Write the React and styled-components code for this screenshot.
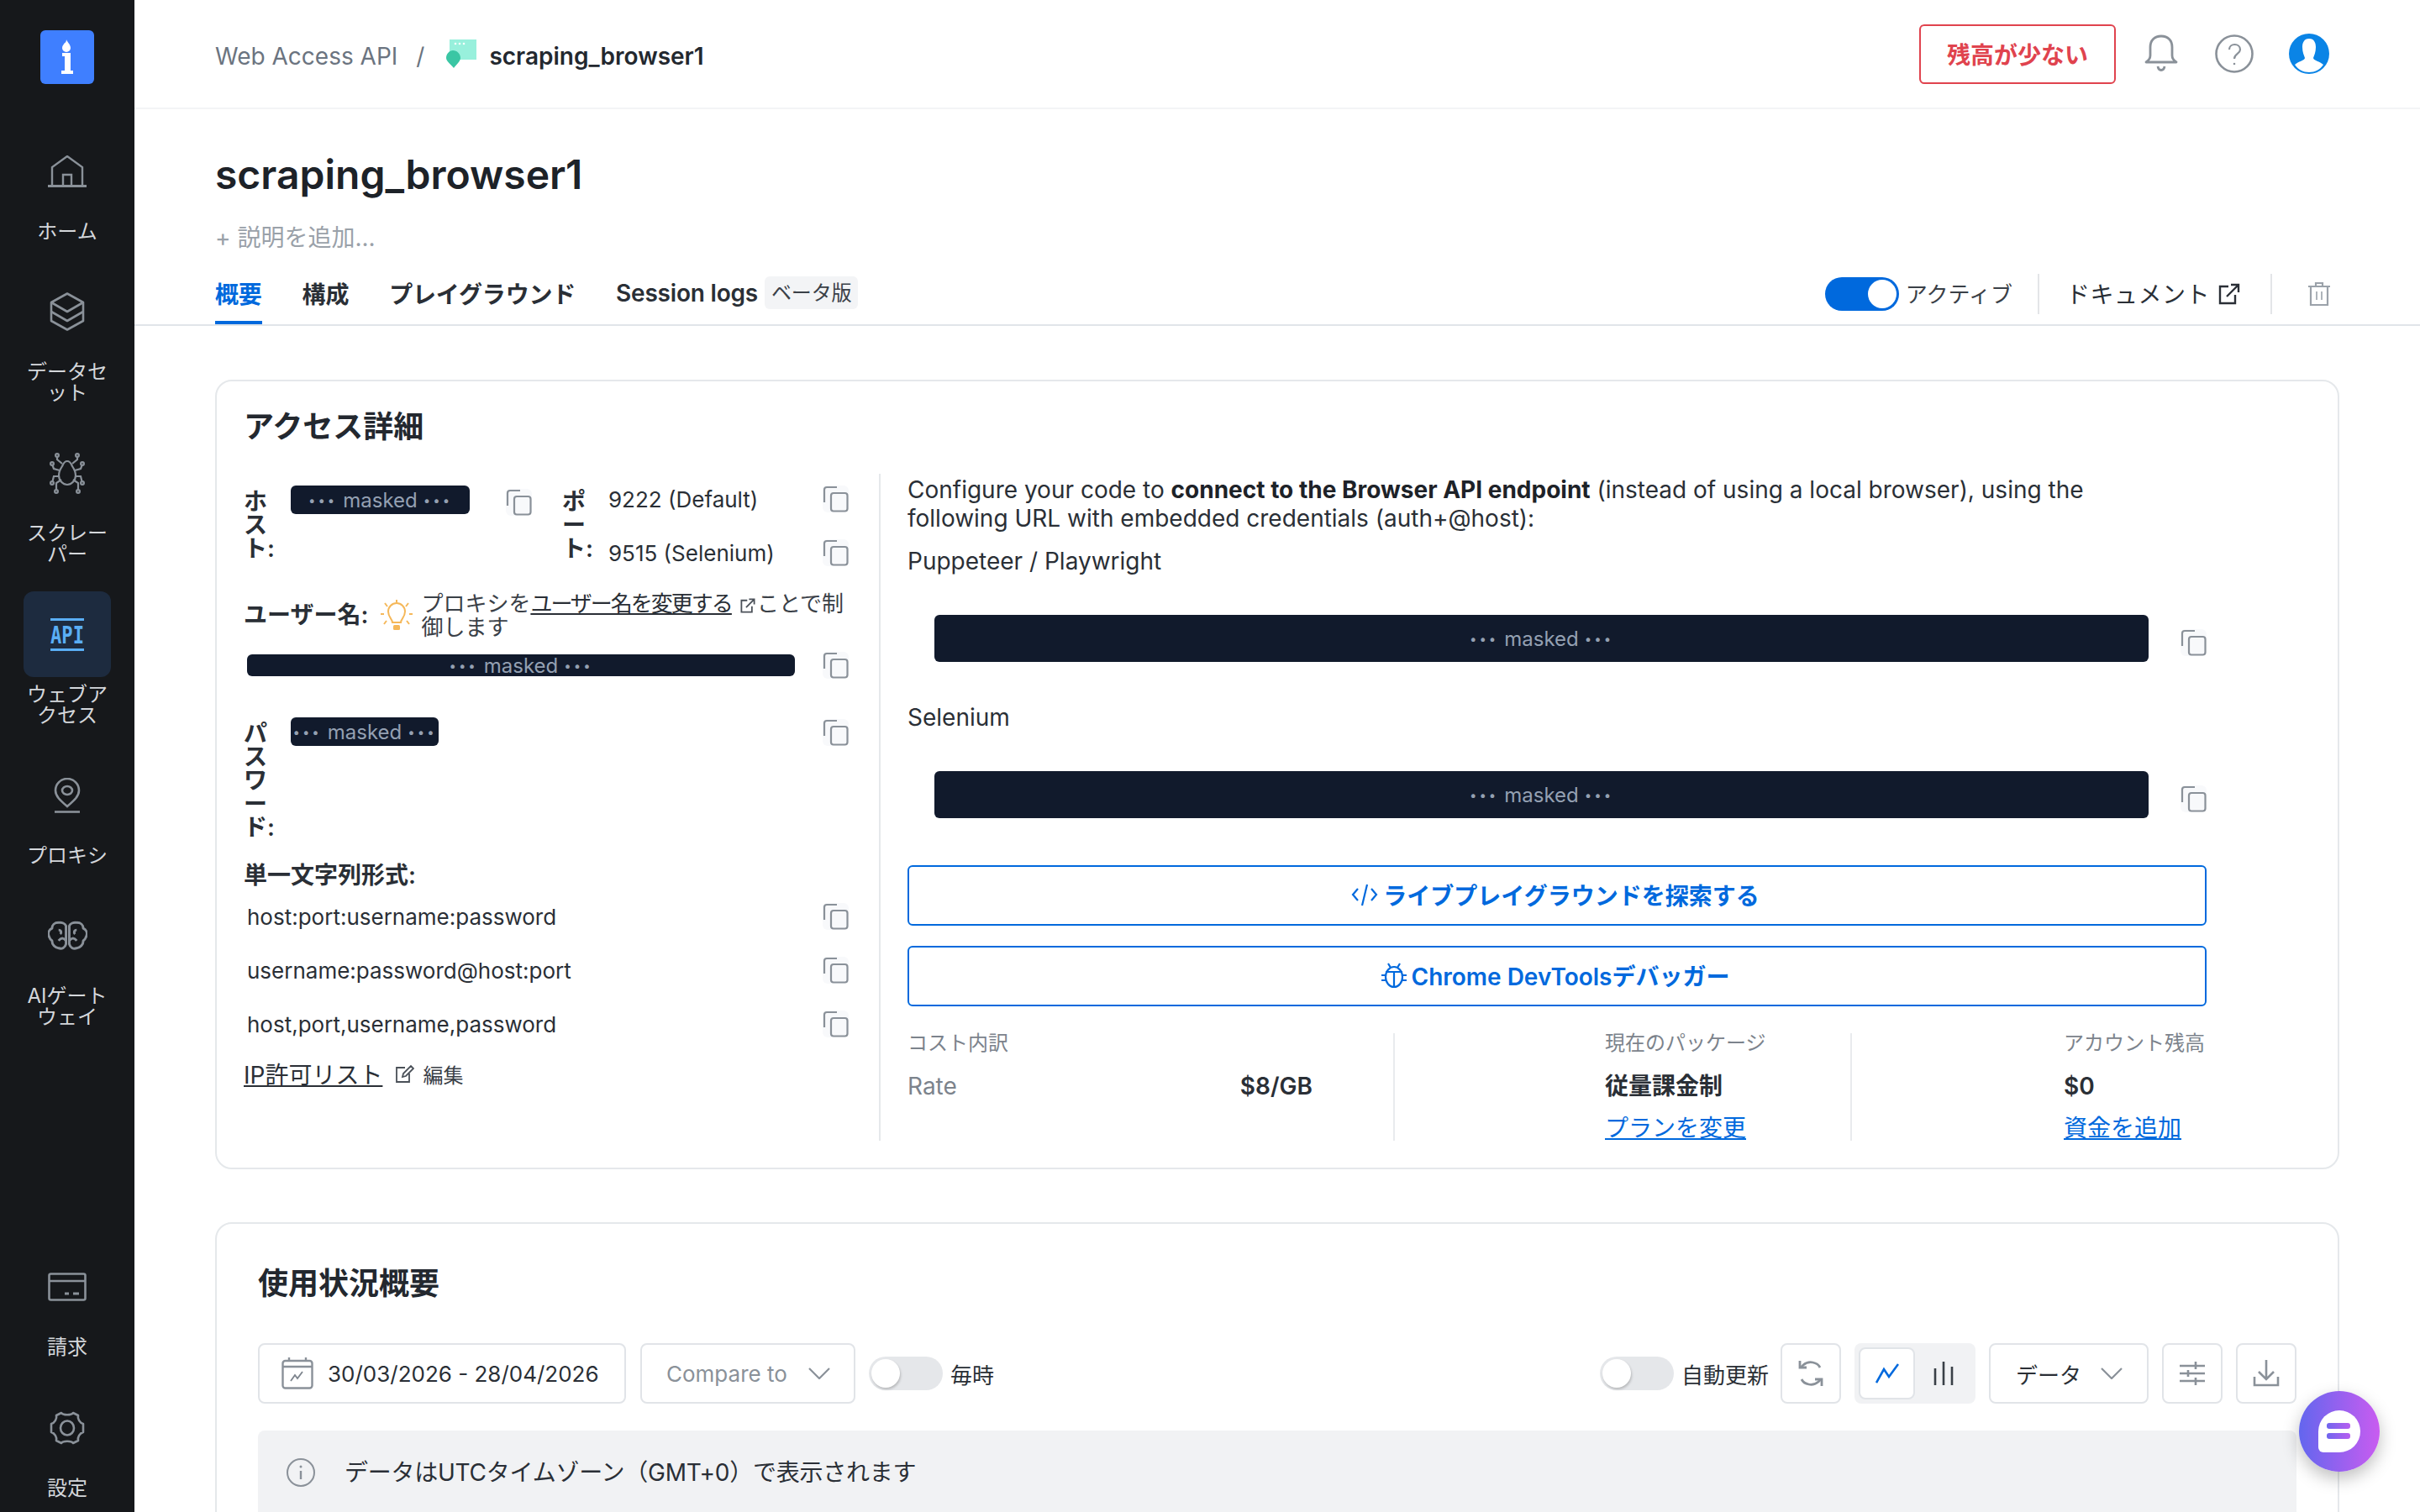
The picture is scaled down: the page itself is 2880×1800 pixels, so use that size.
import React from 'react'
import styled, { createGlobalStyle } from 'styled-components'

const GlobalStyle = createGlobalStyle`
  * { box-sizing: border-box; }
  html, body { margin: 0; padding: 0; height: 100%; overflow: hidden; background: #fff; }
  body { font-family: Inter, "Noto Sans CJK JP", sans-serif; color: #252a31; }
`

const Page = styled.div`
  display: flex;
  width: 2880px;
  height: 1800px;
  overflow: hidden;
`

/* sidebar */
const Sidebar = styled.aside`
  flex: 0 0 160px;
  display: flex;
  flex-direction: column;
  align-items: center;
  background: #16181b;
  padding: 36px 0 16px;
`
const LogoBox = styled.div`
  width: 64px;
  height: 64px;
  margin-bottom: 53px;
`
const NavList = styled.nav`
  display: flex;
  flex-direction: column;
  align-items: center;
  gap: ${(p) => p.$gap}px;
  margin-top: ${(p) => (p.$bottom ? 'auto' : '0')};
`
const NavItem = styled.div`
  width: 104px;
  display: flex;
  flex-direction: column;
  align-items: center;
`
const NavIcon = styled.div`
  width: 104px;
  height: 102px;
  display: flex;
  align-items: center;
  justify-content: center;
  border-radius: 12px;
  background: ${(p) => (p.$active ? '#1d2b3f' : 'transparent')};
`
const NavLabel = styled.div`
  margin-top: 8px;
  width: 104px;
  text-align: center;
  font-size: 24px;
  line-height: 25px;
  color: #d4d7db;
  word-break: break-all;
`

/* main */
const Main = styled.main`
  flex: 1;
  min-width: 0;
  height: 1800px;
  overflow: hidden;
`
const Header = styled.header`
  height: 130px;
  border-bottom: 2px solid #f3f4f6;
  display: flex;
  align-items: center;
  padding: 0 108px 0 96px;
`
const Crumb = styled.span`
  padding-top: 5px;
  font-size: 28px;
  color: #6b7480;
`
const CrumbSep = styled(Crumb)`
  margin: 0 26px 0 22px;
`
const CrumbName = styled.span`
  padding-top: 5px;
  font-size: 28px;
  font-weight: 600;
  color: #23282f;
  margin-left: 15px;
`
const HeaderRight = styled.div`
  margin-left: auto;
  display: flex;
  align-items: center;
`
const WarnButton = styled.div`
  width: 234px;
  height: 71px;
  display: flex;
  align-items: center;
  justify-content: center;
  border: 2px solid #e0434e;
  border-radius: 6px;
  color: #e0434e;
  font-size: 28px;
  font-weight: 600;
  margin-right: 34px;
`
const HeadIcon = styled.div`
  display: flex;
  margin-left: ${(p) => p.$ml || 0}px;
`

const TitleBlock = styled.div`
  padding: 48px 0 0 96px;
`
const PageTitle = styled.h1`
  margin: 0;
  font-size: 48px;
  line-height: 60px;
  font-weight: 600;
  color: #1d2228;
`
const AddDesc = styled.div`
  margin-top: 27px;
  font-size: 28px;
  line-height: 36px;
  color: #9aa1a9;
`
const TabBar = styled.div`
  margin-top: 14px;
  height: 73px;
  display: flex;
  align-items: flex-start;
  justify-content: space-between;
  padding: 0 107px 0 96px;
  border-bottom: 2px solid #e1e5e9;
`
const Tabs = styled.div`
  display: flex;
  gap: 48px;
`
const Tab = styled.div`
  display: flex;
  align-items: center;
  height: 71px;
  font-size: 28px;
  font-weight: 600;
  letter-spacing: -0.2px;
  color: ${(p) => (p.$active ? '#0069dd' : '#2a2f36')};
  border-bottom: 4px solid ${(p) => (p.$active ? '#0069dd' : 'transparent')};
`
const Beta = styled.span`
  margin-left: 8px;
  padding: 0 8px;
  height: 39px;
  line-height: 39px;
  border-radius: 6px;
  background: #f3f4f6;
  font-size: 24px;
  font-weight: 400;
  color: #3a4047;
`
const TabActions = styled.div`
  display: flex;
  align-items: center;
  height: 48px;
  margin-top: 11px;
`
const Switch = styled.div`
  width: 88px;
  height: 40px;
  border-radius: 20px;
  padding: 3px;
  display: flex;
  justify-content: ${(p) => (p.$on ? 'flex-end' : 'flex-start')};
  background: ${(p) => (p.$on ? '#0069dd' : '#e5e7ea')};
  flex: 0 0 auto;
  &::after {
    content: '';
    width: 34px;
    height: 34px;
    border-radius: 50%;
    background: #fff;
    box-shadow: ${(p) => (p.$on ? 'none' : '1px 2px 3px rgba(0,0,0,.2)')};
  }
`
const ActiveLabel = styled.span`
  margin-left: 8px;
  padding-bottom: 3px;
  font-size: 26px;
  color: #3a4047;
`
const VDivider = styled.div`
  width: 2px;
  height: 48px;
  background: #e3e5e8;
  margin: ${(p) => p.$m};
`
const DocLink = styled.span`
  padding-bottom: 3px;
  font-size: 28px;
  letter-spacing: 0.5px;
  color: #2a2f36;
  margin-right: 10px;
`

/* cards */
const Content = styled.div`
  padding: 64px 96px 0;
`
const Card = styled.section`
  border: 2px solid #e5e8eb;
  border-radius: 20px;
  background: #fff;
`
const AccessCard = styled(Card)`
  height: 940px;
  padding: 32px 0 0 32px;
`
const CardTitle = styled.h2`
  margin: 0;
  font-size: 36px;
  line-height: 44px;
  font-weight: 600;
  color: #23282f;
`
const AccessBody = styled.div`
  display: flex;
  margin-top: 34px;
  height: 794px;
`
const LeftCol = styled.div`
  flex: 0 0 758px;
  border-right: 2px solid #e5e8eb;
  padding: 14px 36px 0 0;
  font-size: 28px;
`
const RightCol = styled.div`
  flex: 0 0 1578px;
  padding: 2px 0 0 32px;
`
const Row = styled.div`
  display: flex;
  align-items: ${(p) => p.$align || 'flex-start'};
  margin-top: ${(p) => p.$mt || 0}px;
`
const HostBlock = styled.div`
  flex: 0 0 379px;
  display: flex;
`
const PortBlock = styled.div`
  flex: 0 0 341px;
  display: flex;
`
const NarrowLabel = styled.div`
  flex: 0 0 ${(p) => p.$w || 56}px;
  padding-right: 12px;
  margin-top: 5px;
  font-weight: 600;
  font-size: 28px;
  line-height: 28px;
  color: #2a2f36;
  word-break: break-all;
`
const Chip = styled.div`
  width: ${(p) => p.$w};
  height: ${(p) => p.$h}px;
  margin-left: ${(p) => p.$ml || 0}px;
  flex: 0 0 auto;
  display: flex;
  align-items: center;
  justify-content: center;
  gap: 7px;
  background: #111a2c;
  color: #94a0b2;
  border-radius: 6px;
  font-size: 24px;
  white-space: nowrap;
`
const Dots = styled.span`
  font-size: 15px;
  letter-spacing: 3px;
`
const CopyBox = styled.div`
  flex: 0 0 auto;
  width: 31px;
  height: 32px;
  margin-left: ${(p) => p.$ml || 'auto'};
  margin-top: ${(p) => p.$mt || 0}px;
  background: #f8f9fb;
  border-radius: 6px;
  display: flex;
`
const PortValues = styled.div`
  flex: 1;
  display: flex;
  flex-direction: column;
  gap: 32px;
`
const ValueRow = styled.div`
  display: flex;
  align-items: center;
  height: 32px;
  font-size: 26px;
  color: #2a2f36;
`
const UserLabel = styled.div`
  font-size: 28px;
  font-weight: 600;
  margin: 0 15px 6px 0;
  color: #2a2f36;
  white-space: nowrap;
`
const BulbSlot = styled.div`
  display: flex;
  margin-right: 10px;
`
const Hint = styled.div`
  font-size: 26px;
  line-height: 26px;
  color: #3a4047;
  width: 504px;
  word-break: break-all;
`
const HintLink = styled.a`
  text-decoration: underline;
  letter-spacing: -2px;
  color: #2a2f36;
`
const InlineIcon = styled.span`
  display: inline-block;
  vertical-align: -2px;
  margin: 0 2px 0 10px;
`
const FormatTitle = styled.div`
  margin-top: 29px;
  font-size: 28px;
  line-height: 28px;
  font-weight: 600;
  color: #2a2f36;
`
const FormatList = styled.div`
  margin-top: 19px;
  display: flex;
  flex-direction: column;
  gap: 32px;
  padding-left: 4px;
`
const IpRow = styled.div`
  display: flex;
  align-items: center;
  margin-top: 26px;
  height: 34px;
`
const IpLink = styled.a`
  font-size: 28px;
  text-decoration: underline;
  color: #2a2f36;
  margin-right: 16px;
`
const EditText = styled.span`
  font-size: 24px;
  color: #3a4047;
  margin-left: 10px;
`
const Para = styled.p`
  margin: 0;
  max-width: 1490px;
  font-size: 28px;
  line-height: 34px;
  color: #2a2f36;
  b { font-weight: 700; color: #1d2228; }
`
const PlainLine = styled.div`
  margin-top: ${(p) => p.$mt}px;
  font-size: 28px;
  line-height: 34px;
  color: #2a2f36;
`
const EndpointRow = styled.div`
  display: flex;
  margin-top: 47px;
  padding-left: 32px;
  width: 1546px;
`
const OutlineButton = styled.div`
  width: 1546px;
  height: 72px;
  margin-top: ${(p) => p.$mt}px;
  padding: 0 4px 2px 0;
  display: flex;
  align-items: center;
  justify-content: center;
  gap: 6px;
  border: 2px solid #0069dd;
  border-radius: 6px;
  color: #0069dd;
  font-size: 28px;
  font-weight: 600;
`
const Stats = styled.div`
  display: flex;
  width: 1546px;
  height: 128px;
  margin-top: 32px;
`
const StatCol = styled.div`
  flex: ${(p) => p.$w ? `0 0 ${p.$w}px` : '1'};
  padding-left: ${(p) => p.$pl || 0}px;
  padding-right: ${(p) => p.$pr || 0}px;
  border-right: ${(p) => (p.$line ? '2px solid #e9ebee' : 'none')};
`
const StatLabel = styled.div`
  font-size: 24px;
  line-height: 24px;
  color: #7c838c;
`
const StatValue = styled.div`
  display: flex;
  justify-content: space-between;
  margin-top: 22px;
  font-size: 28px;
  line-height: 34px;
  font-weight: 600;
  color: #2a2f36;
`
const RateName = styled.span`
  font-weight: 400;
  color: #7c838c;
`
const StatLink = styled.a`
  display: block;
  margin-top: 18px;
  font-size: 28px;
  line-height: 30px;
  color: #0069dd;
  text-decoration: underline;
`

/* usage card */
const UsageCard = styled(Card)`
  margin-top: 63px;
  height: 500px;
  padding: 49px 49px 0;
`
const Toolbar = styled.div`
  display: flex;
  align-items: center;
  margin-top: 49px;
  height: 72px;
`
const SelectBox = styled.div`
  width: ${(p) => p.$w}px;
  height: 72px;
  flex: 0 0 auto;
  display: flex;
  align-items: center;
  padding: ${(p) => p.$pad};
  gap: ${(p) => p.$gap || 0}px;
  justify-content: ${(p) => p.$justify || 'flex-start'};
  margin-right: ${(p) => p.$mr || 0}px;
  border: 2px solid #e1e4e8;
  border-radius: 8px;
  font-size: ${(p) => p.$fs || 26}px;
  color: ${(p) => p.$color || '#2a2f36'};
  white-space: nowrap;
`
const SmallLabel = styled.span`
  margin: 0 ${(p) => p.$mr || 0}px 0 9px;
  font-size: 26px;
  color: #2a2f36;
  white-space: nowrap;
`
const Spacer = styled.div`
  flex: 1;
`
const ChartSwitch = styled.div`
  width: 144px;
  height: 72px;
  margin-right: 16px;
  padding: 5px;
  display: flex;
  background: #f1f2f4;
  border-radius: 8px;
`
const ChartOption = styled.div`
  width: 67px;
  height: 62px;
  display: flex;
  align-items: center;
  justify-content: center;
  border-radius: 8px;
  background: ${(p) => (p.$on ? '#fff' : 'transparent')};
  border: 2px solid ${(p) => (p.$on ? '#e1e4e8' : 'transparent')};
`
const IconButton = styled(SelectBox)`
  justify-content: center;
  padding: 0;
`
const Alert = styled.div`
  margin-top: 32px;
  height: 160px;
  padding: 32px 0 0 34px;
  display: flex;
  align-items: flex-start;
  gap: 35px;
  background: #f1f2f4;
  border-radius: 8px;
  font-size: 28px;
  line-height: 36px;
  letter-spacing: -0.25px;
  color: #2a2f36;
`
const ChatBubble = styled.div`
  position: fixed;
  left: 2736px;
  top: 1656px;
  width: 96px;
  height: 96px;
  display: flex;
  align-items: center;
  justify-content: center;
  border-radius: 50%;
  background: linear-gradient(90deg, #6366ee, #c95cf0);
  box-shadow: 0 8px 20px rgba(0, 0, 0, 0.25);
`

/* drawings */
const G = '#8a9199'

const Logo = () => (
  <svg width="64" height="64" viewBox="0 0 64 64">
    <rect width="64" height="64" rx="6" fill="#3f7fff" />
    <path d="M31 11c1 3 5 6 5 10a5 5 0 0 1-10 0c0-3 2-4 3-6 1 0 2-2 2-4z" fill="#fff" />
    <path d="M26 27h10v21h3v4H25v-4h4V31h-3z" fill="#fff" />
  </svg>
)
const HomeIcon = () => (
  <svg width="46" height="38" viewBox="0 0 46 38" fill="none" stroke={G} strokeWidth="2.4">
    <path d="M5 36V14L23 1l18 13v22" />
    <path d="M18 36V23h10v13" />
    <path d="M0 36.5h46" strokeWidth="3" />
  </svg>
)
const StackIcon = () => (
  <svg width="42" height="46" viewBox="0 0 42 46" fill="none" stroke={G} strokeWidth="2.6" strokeLinejoin="round">
    <path d="M21 1.5 40 12v22L21 44.5 2 34V12z" />
    <path d="M2 12l19 11 19-11" />
    <path d="M2 23l19 11 19-11" />
  </svg>
)
const SpiderIcon = () => {
  const legs = (
    <g>
      <circle cx="10" cy="4" r="1.9" />
      <path d="M16 14l-6-5V6" />
      <circle cx="4" cy="14" r="1.9" />
      <path d="M13 22l-7-2-1.5-4" />
      <circle cx="4" cy="37" r="1.9" />
      <path d="M13 29H6l-1.5 6" />
      <circle cx="9" cy="47" r="1.9" />
      <path d="M15 33l-6 4v8" />
    </g>
  )
  return (
    <svg width="44" height="51" viewBox="0 0 44 51" fill="none" stroke={G} strokeWidth="2.2">
      <path d="M22 11c4 0 5 4 6 6 2 3 4 7 4 11 0 6-5 11-10 11s-10-5-10-11c0-4 2-8 4-11 1-2 2-6 6-6z" />
      {legs}
      <g transform="translate(44 0) scale(-1 1)">{legs}</g>
    </svg>
  )
}
const ApiIcon = () => (
  <svg width="40" height="39" viewBox="0 0 40 39" overflow="visible">
    <rect width="40" height="3" fill="#5aaef5" />
    <rect y="36" width="40" height="3" fill="#5aaef5" />
    <text x="20" y="30" textAnchor="middle" fontFamily="'DejaVu Sans Mono', monospace" fontWeight="700" fontSize="29" fill="#5aaef5" textLength="40" lengthAdjust="spacingAndGlyphs">API</text>
  </svg>
)
const PinIcon = () => (
  <svg width="32" height="42" viewBox="0 0 32 42" fill="none" stroke={G} strokeWidth="2.6">
    <path d="M16 34C8 27 2 22 2 15a14 14 0 0 1 28 0c0 7-6 12-14 19z" />
    <ellipse cx="16" cy="15" rx="6" ry="5" />
    <path d="M1 40.5h30" />
  </svg>
)
const BrainIcon = () => {
  const half = (
    <g>
      <path d="M22 6C21 3 17 1.5 13 2 8 2 5 5 5 9c-4 2-5 6-4 9 1 3 2 5 4 6 0 5 4 9 8 9 4 2 8-1 9-5z" />
      <path d="M13 11c3 0 4 3 2 5M22 24c-3-4-6-4-9 0" />
    </g>
  )
  return (
    <svg width="47" height="36" viewBox="0 0 48 36" fill="none" stroke={G} strokeWidth="3" strokeLinejoin="round">
      {half}
      <g transform="translate(48 0) scale(-1 1)">{half}</g>
    </svg>
  )
}
const BillIcon = () => (
  <svg width="46" height="34" viewBox="0 0 46 34" fill="none" stroke={G} strokeWidth="2.6">
    <rect x="1.5" y="1.5" width="43" height="31" rx="2" />
    <path d="M1.5 10h43" />
    <path d="M20 25h5M30 25h7" strokeWidth="3" />
  </svg>
)
const GearIcon = () => (
  <svg width="42" height="42" viewBox="0 0 42 42" fill="none" stroke={G} strokeWidth="2.6">
    <path d="M14 3c2 3 12 3 14 0l6 3c-1 4 2 9 6 10v10c-4 1-7 6-6 10l-6 3c-2-3-12-3-14 0l-6-3c1-4-2-9-6-10V16c4-1 7-6 6-10z" strokeLinejoin="round" />
    <ellipse cx="21" cy="21" rx="8" ry="8.5" />
  </svg>
)
const BranchIcon = () => (
  <svg width="36" height="34" viewBox="0 0 36 34">
    <rect x="4" width="32" height="24" fill="#98f0dc" />
    <circle cx="11" cy="5" r="1.3" fill="#fff" />
    <circle cx="16" cy="5" r="1.3" fill="#fff" />
    <circle cx="21" cy="5" r="1.3" fill="#fff" />
    <path d="M8 13c5 0 9 4 9 9 0 4-5 8-8 12-3-4-9-8-9-12 0-5 4-9 8-9z" fill="#3ac6a4" />
  </svg>
)
const BellIcon = () => (
  <svg width="40" height="46" viewBox="0 0 40 46" fill="none" stroke={G} strokeWidth="2.8">
    <path d="M2 33c3-2 5-4 5-8V15C7 7 12 2 20 2s13 5 13 13v10c0 4 2 6 5 8z" strokeLinejoin="round" />
    <path d="M16 38c1 6 7 6 8 0" />
  </svg>
)
const HelpIcon = () => (
  <svg width="46" height="46" viewBox="0 0 46 46" fill="none" stroke={G} strokeWidth="2.6">
    <circle cx="23" cy="23" r="21.5" />
    <path d="M17 18c0-8 13-8 13 0 0 5-7 5-7 11" strokeWidth="2.2" />
    <circle cx="23" cy="35" r="1.3" fill={G} stroke="none" />
  </svg>
)
const AvatarIcon = () => (
  <svg width="48" height="48" viewBox="0 0 48 48">
    <circle cx="24" cy="24" r="24" fill="#0a84e6" />
    <path d="M24 6c6 0 8 5 8 10 0 6-2 10-3 13 0 3 8 4 12 8-4 6-10 9-17 9s-13-3-17-9c4-4 12-5 12-8-1-3-3-7-3-13 0-5 2-10 8-10z" fill="#fff" />
  </svg>
)
const ExternalIcon = ({ size = 26, color = '#2a2f36', w = 2.4 }) => (
  <svg width={size} height={size} viewBox="0 0 26 26" fill="none" stroke={color} strokeWidth={w}>
    <path d="M12 4H2v20h18V14" />
    <path d="M10 16 24 2M15 2h9v9" />
  </svg>
)
const TrashIcon = () => (
  <svg width="26" height="30" viewBox="0 0 26 30" fill="none" stroke="#9ba2aa" strokeWidth="2.2">
    <path d="M0 6h26M9 6V2h8v4" />
    <path d="M3 6v22h20V6" />
    <path d="M10 12v10M16 12v10" strokeWidth="1.6" />
  </svg>
)
const CopyIcon = () => (
  <svg width="31" height="32" viewBox="0 0 31 32" fill="none" stroke={G} strokeWidth="2.2">
    <path d="M2 20V5a3 3 0 0 1 3-3h12" />
    <rect x="10" y="9" width="19.5" height="21.5" rx="3" />
  </svg>
)
const Copy = ({ ml, mt }) => (
  <CopyBox $ml={ml} $mt={mt}>
    <CopyIcon />
  </CopyBox>
)
const Masked = ({ w, h, ml }) => (
  <Chip $w={w} $h={h} $ml={ml}>
    <Dots>•••</Dots>masked<Dots>•••</Dots>
  </Chip>
)
const BulbIcon = () => (
  <svg width="38" height="38" viewBox="0 0 38 38" fill="none" stroke="#f5b85a" strokeWidth="2">
    <path d="M14 27c0-4-5-6-5-13a10 10 0 0 1 20 0c0 7-5 9-5 13z" />
    <rect x="15" y="30" width="8" height="6" rx="1.5" fill="#f5b85a" stroke="none" />
    <path d="M19 0v3M5 4l3 4M33 4l-3 4M0 17h4M34 17h4M4 29l3-4M34 29l-3-4" />
  </svg>
)
const EditIcon = () => (
  <svg width="22" height="22" viewBox="0 0 22 22" fill="none" stroke="#4a5058" strokeWidth="1.8">
    <path d="M11 4H1v17h15V11" />
    <path d="M8 15l1-4L18 2l3 3-9 9z" />
  </svg>
)
const CodeIcon = () => (
  <svg width="32" height="30" viewBox="0 0 32 30" fill="none" stroke="#0069dd" strokeWidth="2.2">
    <path d="M8 8 2 15l6 7M24 8l6 7-6 7M19 3l-6 25" />
  </svg>
)
const BugIcon = () => (
  <svg width="30" height="32" viewBox="0 0 30 32" fill="none" stroke="#0069dd" strokeWidth="2.2">
    <ellipse cx="15" cy="18" rx="10" ry="12" />
    <path d="M5 12h20M15 12v18M8 2l3 5M22 2l-3 5M0 16h5M0 22h5M25 16h5M25 22h5" />
  </svg>
)
const CalendarIcon = () => (
  <svg width="38" height="38" viewBox="0 0 38 38" fill="none" stroke={G} strokeWidth="2.4">
    <rect x="1.5" y="4" width="35" height="32.5" rx="3" />
    <path d="M1.5 11h35M9 0v4M29 0v4" />
    <path d="M11 28l5-7 3 4 6-8" stroke="#7c838c" strokeWidth="1.8" />
  </svg>
)
const Chevron = () => (
  <svg width="26" height="14" viewBox="0 0 26 14" fill="none" stroke={G} strokeWidth="2.2">
    <path d="M1 1l12 12L25 1" />
  </svg>
)
const RefreshIcon = () => (
  <svg width="32" height="34" viewBox="0 0 32 34" fill="none" stroke={G} strokeWidth="2.8">
    <path d="M27 10C24 4 14 1 7 7l-3 3" />
    <path d="M3 2v8h8" />
    <path d="M5 24c3 6 13 9 20 3l3-3" />
    <path d="M29 32v-8h-8" />
  </svg>
)
const LineIcon = () => (
  <svg width="28" height="26" viewBox="0 0 28 26" fill="none" stroke="#0069dd" strokeWidth="2.6">
    <path d="M1 24 10 8l6 9L27 2" />
  </svg>
)
const BarsIcon = () => (
  <svg width="26" height="28" viewBox="0 0 26 28" fill="none" stroke="#3a4047" strokeWidth="2.6">
    <path d="M3 8v20M13 0v28M23 6v22" />
  </svg>
)
const SlidersIcon = () => (
  <svg width="30" height="30" viewBox="0 0 30 30" fill="none" stroke={G} strokeWidth="2.6">
    <path d="M0 6h30M0 15h30M0 24h30" />
    <path d="M19 1v9M10 11v8M19 20v9" />
  </svg>
)
const DownloadIcon = () => (
  <svg width="32" height="32" viewBox="0 0 32 32" fill="none" stroke={G} strokeWidth="2.6">
    <path d="M16 0v22M7 14l9 9 9-9" />
    <path d="M2 20v10h28V20" />
  </svg>
)
const InfoIcon = () => (
  <svg width="34" height="36" viewBox="0 0 34 36" fill="none" stroke={G} strokeWidth="2">
    <circle cx="17" cy="18" r="16" />
    <path d="M17 16v10" strokeWidth="2.4" />
    <circle cx="17" cy="11" r="1.5" fill={G} stroke="none" />
  </svg>
)
const ChatIcon = () => (
  <svg width="50" height="50" viewBox="0 0 50 50">
    <defs>
      <linearGradient id="chatLines" x1="0" x2="1" y1="0" y2="0">
        <stop offset="0" stopColor="#6f66ee" />
        <stop offset="1" stopColor="#b85ff0" />
      </linearGradient>
    </defs>
    <path d="M25 0a25 25 0 0 1 0 50H6a6 6 0 0 1-6-6V25A25 25 0 0 1 25 0z" fill="#fff" />
    <rect x="10" y="15" width="28" height="7" rx="3" fill="url(#chatLines)" />
    <rect x="10" y="27" width="28" height="7" rx="3" fill="url(#chatLines)" />
  </svg>
)

const topNav = [
  { label: 'ホーム', icon: <HomeIcon /> },
  { label: 'データセット', icon: <StackIcon /> },
  { label: 'スクレーパー', icon: <SpiderIcon /> },
  { label: 'ウェブアクセス', icon: <ApiIcon />, active: true },
  { label: 'プロキシ', icon: <PinIcon /> },
  { label: 'AIゲートウェイ', icon: <BrainIcon /> },
]
const bottomNav = [
  { label: '請求', icon: <BillIcon /> },
  { label: '設定', icon: <GearIcon /> },
]
const formats = [
  'host:port:username:password',
  'username:password@host:port',
  'host,port,username,password',
]

function NavEntry({ item }) {
  return (
    <NavItem>
      <NavIcon $active={item.active}>{item.icon}</NavIcon>
      <NavLabel>{item.label}</NavLabel>
    </NavItem>
  )
}

export default function App() {
  return (
    <Page>
      <GlobalStyle />
      <Sidebar>
        <LogoBox>
          <Logo />
        </LogoBox>
        <NavList $gap={32}>
          {topNav.map((item) => (
            <NavEntry key={item.label} item={item} />
          ))}
        </NavList>
        <NavList $gap={33} $bottom>
          {bottomNav.map((item) => (
            <NavEntry key={item.label} item={item} />
          ))}
        </NavList>
      </Sidebar>

      <Main>
        <Header>
          <Crumb>Web Access API</Crumb>
          <CrumbSep>/</CrumbSep>
          <BranchIcon />
          <CrumbName>scraping_browser1</CrumbName>
          <HeaderRight>
            <WarnButton>残高が少ない</WarnButton>
            <HeadIcon>
              <BellIcon />
            </HeadIcon>
            <HeadIcon $ml={44}>
              <HelpIcon />
            </HeadIcon>
            <HeadIcon $ml={42}>
              <AvatarIcon />
            </HeadIcon>
          </HeaderRight>
        </Header>

        <TitleBlock>
          <PageTitle>scraping_browser1</PageTitle>
          <AddDesc>+ 説明を追加...</AddDesc>
        </TitleBlock>

        <TabBar>
          <Tabs>
            <Tab $active>概要</Tab>
            <Tab>構成</Tab>
            <Tab>プレイグラウンド</Tab>
            <Tab>
              Session logs<Beta>ベータ版</Beta>
            </Tab>
          </Tabs>
          <TabActions>
            <Switch $on />
            <ActiveLabel>アクティブ</ActiveLabel>
            <VDivider $m="0 32px 0 30px" />
            <DocLink>ドキュメント</DocLink>
            <ExternalIcon />
            <VDivider $m="0 43px 0 36px" />
            <TrashIcon />
          </TabActions>
        </TabBar>

        <Content>
          <AccessCard>
            <CardTitle>アクセス詳細</CardTitle>
            <AccessBody>
              <LeftCol>
                <Row>
                  <HostBlock>
                    <NarrowLabel>ホスト:</NarrowLabel>
                    <Masked w="213px" h={34} />
                    <Copy ml="43px" mt={4} />
                  </HostBlock>
                  <PortBlock>
                    <NarrowLabel $w={55}>ポート:</NarrowLabel>
                    <PortValues>
                      <ValueRow>
                        9222 (Default)
                        <Copy />
                      </ValueRow>
                      <ValueRow>
                        9515 (Selenium)
                        <Copy />
                      </ValueRow>
                    </PortValues>
                  </PortBlock>
                </Row>

                <Row $align="center" $mt={32}>
                  <UserLabel>ユーザー名:</UserLabel>
                  <BulbSlot>
                    <BulbIcon />
                  </BulbSlot>
                  <Hint>
                    プロキシを<HintLink>ユーザー名を変更する</HintLink>
                    <InlineIcon>
                      <ExternalIcon size={18} color="#4a5058" w={2.6} />
                    </InlineIcon>
                    ことで制御します
                  </Hint>
                </Row>

                <Row $align="center" $mt={16}>
                  <Masked w="652px" h={26} ml={4} />
                  <Copy />
                </Row>

                <Row $mt={46}>
                  <NarrowLabel>パスワード:</NarrowLabel>
                  <Masked w="176px" h={34} />
                  <Copy mt={2} />
                </Row>

                <FormatTitle>単一文字列形式:</FormatTitle>
                <FormatList>
                  {formats.map((f) => (
                    <ValueRow key={f}>
                      {f}
                      <Copy />
                    </ValueRow>
                  ))}
                </FormatList>

                <IpRow>
                  <IpLink>IP許可リスト</IpLink>
                  <EditIcon />
                  <EditText>編集</EditText>
                </IpRow>
              </LeftCol>

              <RightCol>
                <Para>
                  Configure your code to <b>connect to the Browser API endpoint</b> (instead of using a local browser), using the following URL with embedded credentials (auth+@host):
                </Para>
                <PlainLine $mt={17}>Puppeteer / Playwright</PlainLine>
                <EndpointRow>
                  <Masked w="1445px" h={56} />
                  <Copy ml="auto" mt={17} />
                </EndpointRow>
                <PlainLine $mt={49}>Selenium</PlainLine>
                <EndpointRow>
                  <Masked w="1445px" h={56} />
                  <Copy ml="auto" mt={17} />
                </EndpointRow>
                <OutlineButton $mt={56}>
                  <CodeIcon />
                  ライブプレイグラウンドを探索する
                </OutlineButton>
                <OutlineButton $mt={24}>
                  <BugIcon />
                  Chrome DevToolsデバッガー
                </OutlineButton>
                <Stats>
                  <StatCol $w={580} $pr={96} $line>
                    <StatLabel>コスト内訳</StatLabel>
                    <StatValue>
                      <RateName>Rate</RateName>
                      <span>$8/GB</span>
                    </StatValue>
                  </StatCol>
                  <StatCol $w={544} $pl={250} $line>
                    <StatLabel>現在のパッケージ</StatLabel>
                    <StatValue>従量課金制</StatValue>
                    <StatLink>プランを変更</StatLink>
                  </StatCol>
                  <StatCol $pl={252}>
                    <StatLabel>アカウント残高</StatLabel>
                    <StatValue>$0</StatValue>
                    <StatLink>資金を追加</StatLink>
                  </StatCol>
                </Stats>
              </RightCol>
            </AccessBody>
          </AccessCard>

          <UsageCard>
            <CardTitle>使用状況概要</CardTitle>
            <Toolbar>
              <SelectBox $w={438} $pad="0 0 0 26px" $gap={17} $mr={17}>
                <CalendarIcon />
                30/03/2026 - 28/04/2026
              </SelectBox>
              <SelectBox $w={256} $pad="0 28px 0 29px" $justify="space-between" $mr={16} $color="#8a9199">
                Compare to
                <Chevron />
              </SelectBox>
              <Switch />
              <SmallLabel>毎時</SmallLabel>
              <Spacer />
              <Switch />
              <SmallLabel $mr={14}>自動更新</SmallLabel>
              <IconButton $w={72} $mr={16}>
                <RefreshIcon />
              </IconButton>
              <ChartSwitch>
                <ChartOption $on>
                  <LineIcon />
                </ChartOption>
                <ChartOption>
                  <BarsIcon />
                </ChartOption>
              </ChartSwitch>
              <SelectBox $w={190} $pad="0 29px 0 30px" $justify="space-between" $mr={16}>
                データ
                <Chevron />
              </SelectBox>
              <IconButton $w={72} $mr={16}>
                <SlidersIcon />
              </IconButton>
              <IconButton $w={72}>
                <DownloadIcon />
              </IconButton>
            </Toolbar>
            <Alert>
              <InfoIcon />
              データはUTCタイムゾーン（GMT+0）で表示されます
            </Alert>
          </UsageCard>
        </Content>
      </Main>

      <ChatBubble>
        <ChatIcon />
      </ChatBubble>
    </Page>
  )
}
